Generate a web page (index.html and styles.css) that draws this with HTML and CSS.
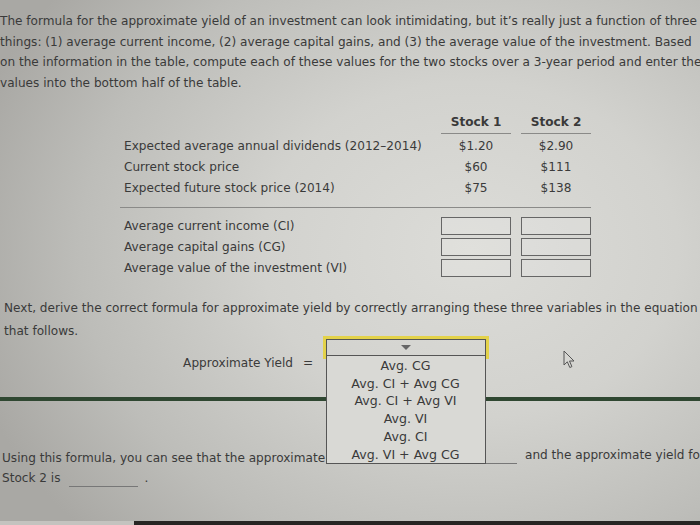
FILE: index.html
```html
<!DOCTYPE html>
<html>
<head>
<meta charset="utf-8">
<link rel="stylesheet" href="styles.css">
</head>
<body>
<div class="page">
  <p class="intro">The formula for the approximate yield of an investment can look intimidating, but it’s really just a function of three<br>things: (1) average current income, (2) average capital gains, and (3) the average value of the investment. Based<br>on the information in the table, compute each of these values for the two stocks over a 3-year period and enter the<br>values into the bottom half of the table.</p>

  <div class="table">
    <div class="hcell blankhead"></div>
    <div class="hcell">Stock 1</div>
    <div class="hcell">Stock 2</div>

    <div class="label first">Expected average annual dividends (2012–2014)</div>
    <div class="val first">$1.20</div>
    <div class="val first">$2.90</div>
    <div class="label">Current stock price</div>
    <div class="val">$60</div>
    <div class="val">$111</div>
    <div class="label last">Expected future stock price (2014)</div>
    <div class="val last">$75</div>
    <div class="val last">$138</div>

    <div class="sep"></div>

    <div class="label lfirst">Average current income (CI)</div>
    <div class="val lfirst"><span class="box"></span></div>
    <div class="val lfirst"><span class="box"></span></div>
    <div class="label">Average capital gains (CG)</div>
    <div class="val"><span class="box"></span></div>
    <div class="val"><span class="box"></span></div>
    <div class="label">Average value of the investment (VI)</div>
    <div class="val"><span class="box"></span></div>
    <div class="val"><span class="box"></span></div>
  </div>

  <p class="next">Next, derive the correct formula for approximate yield by correctly arranging these three variables in the equation<br>that follows.</p>

  <div class="formula">
    <div class="flabel">Approximate Yield</div>
    <div class="eq">=</div>
    <div class="select">
      <span class="tri"></span>
      <div class="listbox">
        <div class="opt">Avg. CG</div>
        <div class="opt">Avg. CI + Avg CG</div>
        <div class="opt">Avg. CI + Avg VI</div>
        <div class="opt">Avg. VI</div>
        <div class="opt">Avg. CI</div>
        <div class="opt">Avg. VI + Avg CG</div>
      </div>
    </div>
  </div>

  <div class="rule"></div>

  <div class="using">
    <div class="uline"><span class="lead">Using this formula, you can see that the approximate</span><span class="blank short"></span><span class="after">and the approximate yield for</span></div>
    <div class="uline"><span>Stock 2 is</span><span class="blank long"></span><span class="dot">.</span></div>
  </div>

  <div class="bottom"><div class="lightpart"></div><div class="darkpart"></div></div>

  <svg class="cursor" width="13" height="19" viewBox="0 0 13 19"><path d="M1 1 L1 15 L4.3 11.8 L6.8 17.5 L8.9 16.6 L6.5 11 L11 11 Z" fill="#d6d6d2" stroke="#555" stroke-width="1" stroke-linejoin="round"/></svg>
</div>
</body>
</html>
```
FILE: styles.css
```css
html, body {
  margin: 0;
  padding: 0;
}
body {
  width: 700px;
  height: 525px;
  overflow: hidden;
  font-family: "DejaVu Sans", Verdana, sans-serif;
  font-size: 12.1px;
  color: #3a3a3a;
}
.page {
  position: relative;
  width: 700px;
  height: 525px;
  overflow: hidden;
  background:
    radial-gradient(ellipse 520px 420px at 470px 250px, #dcdcd8 0%, #d2d2ce 40%, #bdbdb9 75%, #a9a8a4 100%);
  display: flex;
  flex-direction: column;
}
.intro {
  margin: 0;
  padding: 11px 0 0 0;
  line-height: 20.7px;
  white-space: nowrap;
}
.table {
  margin: 18px 0 0 124px;
  display: grid;
  grid-template-columns: 307px 70px 70px;
  column-gap: 10px;
  align-items: center;
}
.hcell {
  height: 20px;
  line-height: 20px;
  padding-bottom: 1px;
  text-align: center;
  font-weight: bold;
  border-bottom: 1.5px solid #8a8a88;
}
.hcell.blankhead {
  border-bottom: none;
}
.label, .val {
  height: 21px;
  line-height: 21px;
  white-space: nowrap;
}
.val {
  text-align: center;
}
.first {
  margin-top: 2px;
}
.last {
  margin-bottom: 8px;
}
.sep {
  grid-column: 1 / 4;
  margin-left: -4px;
  height: 1.5px;
  background: #8a8a88;
}
.lfirst {
  margin-top: 7.5px;
}
.box {
  display: inline-block;
  box-sizing: border-box;
  width: 70px;
  height: 18px;
  vertical-align: middle;
  border: 1.5px solid #666;
  background: rgba(255,255,255,0.12);
}
.next {
  margin: 18px 0 0 4px;
  line-height: 23px;
  white-space: nowrap;
}
.formula {
  display: flex;
  align-items: flex-start;
  margin-top: -4px;
}
.flabel {
  width: 293px;
  text-align: right;
  padding-top: 14px;
  line-height: 20px;
  white-space: nowrap;
}
.eq {
  width: 30px;
  text-align: center;
  padding-top: 14px;
  line-height: 20px;
}
.select {
  position: relative;
  margin-left: 3px;
  box-sizing: border-box;
  width: 160px;
  height: 17px;
  border: 1.5px solid #555;
  outline: 3px solid #e3d24a;
  outline-offset: 0;
  display: flex;
  justify-content: center;
  align-items: center;
}
.tri {
  width: 0;
  height: 0;
  border-left: 5px solid transparent;
  border-right: 5px solid transparent;
  border-top: 5px solid #666;
}
.listbox {
  position: absolute;
  z-index: 2;
  left: -1.5px;
  top: 100%;
  box-sizing: border-box;
  width: 160px;
  height: 109.5px;
  padding-top: 1px;
  border: 1.5px solid #555;
  background: #d9d9d5;
}
.opt {
  height: 17.8px;
  line-height: 17.8px;
  text-align: center;
  color: #3a3a3a;
  font-size: 12.6px;
  white-space: nowrap;
}
.rule {
  margin-top: 24px;
  height: 4px;
  background: #2f4731;
}
.using {
  margin: 47px 0 0 2px;
}
.uline {
  display: flex;
  align-items: flex-end;
  height: 20px;
  line-height: 20px;
  white-space: nowrap;
}
.lead {
  width: 484px;
  flex: none;
}
.blank {
  display: inline-block;
  border-bottom: 1px solid #777;
  height: 10px;
  flex: none;
}
.blank.short {
  width: 31px;
  margin-bottom: 4px;
}
.after {
  margin-left: 8px;
  position: relative;
  top: -3px;
}
.blank.long {
  width: 69px;
  margin-left: 8px;
  margin-bottom: 1px;
}
.dot {
  margin-left: 7px;
}
.bottom {
  margin-top: auto;
  height: 4.5px;
  display: flex;
}
.lightpart {
  width: 134px;
  background: #c4c3bf;
}
.darkpart {
  flex: 1;
  background: #272523;
}
.cursor {
  position: absolute;
  left: 563px;
  top: 350px;
}
```
